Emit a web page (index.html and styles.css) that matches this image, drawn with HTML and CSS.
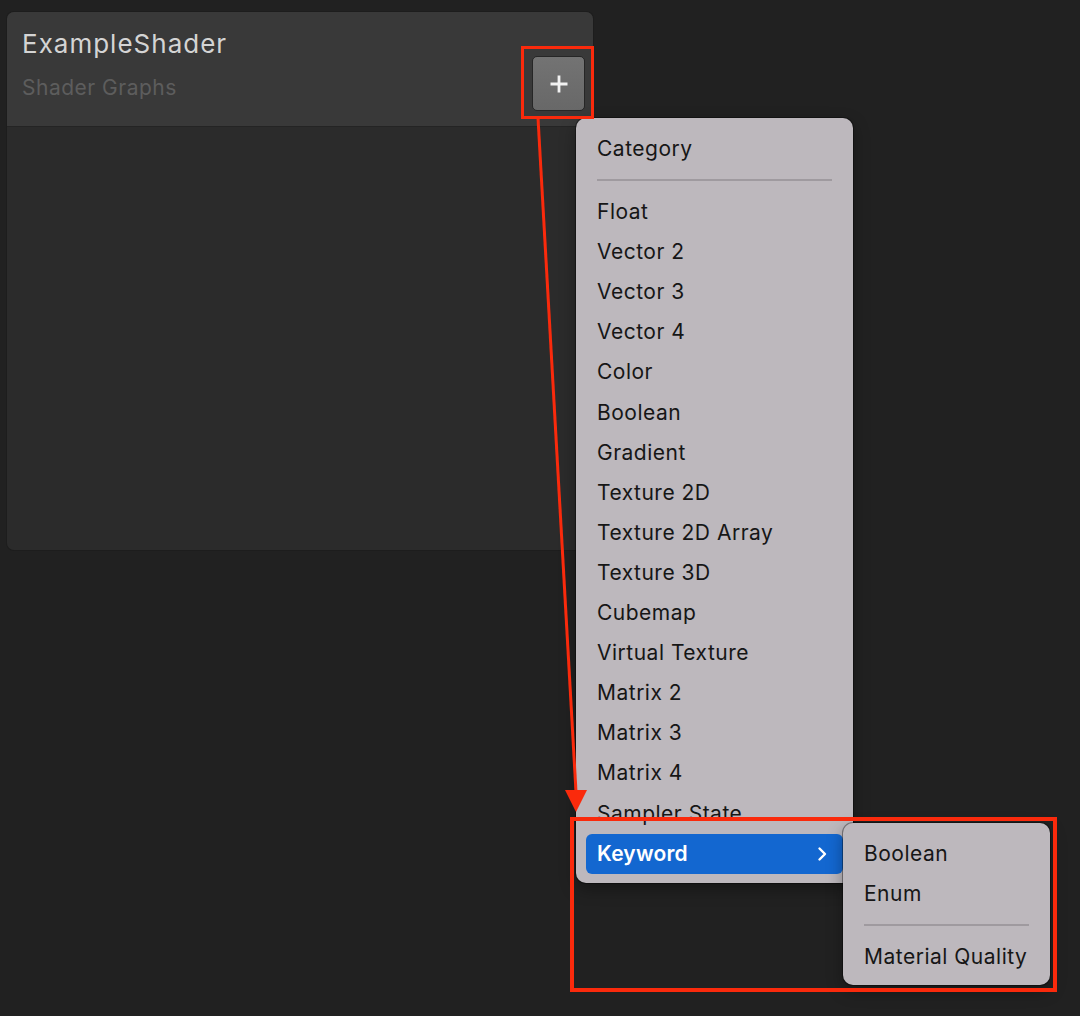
FILE: index.html
```html
<!DOCTYPE html>
<html>
<head>
<meta charset="utf-8">
<link rel="stylesheet" href="styles.css">
</head>
<body>
<div class="page">
  <section class="panel">
    <header class="panel-header">
      <div class="titles">
        <div class="title">ExampleShader</div>
        <div class="subtitle">Shader Graphs</div>
      </div>
      <button class="add-btn" aria-label="Add">
        <svg width="20" height="20" viewBox="0 0 20 20"><path d="M10 1.5v17M1.5 10h17" stroke="#f2f2f2" stroke-width="2.8" stroke-linecap="butt"/></svg>
      </button>
    </header>
    <div class="panel-body"></div>
  </section>

  <div class="menu main-menu">
    <div class="item">Category</div>
    <div class="sep"></div>
    <div class="item">Float</div>
    <div class="item">Vector 2</div>
    <div class="item">Vector 3</div>
    <div class="item">Vector 4</div>
    <div class="item">Color</div>
    <div class="item">Boolean</div>
    <div class="item">Gradient</div>
    <div class="item">Texture 2D</div>
    <div class="item">Texture 2D Array</div>
    <div class="item">Texture 3D</div>
    <div class="item">Cubemap</div>
    <div class="item">Virtual Texture</div>
    <div class="item">Matrix 2</div>
    <div class="item">Matrix 3</div>
    <div class="item">Matrix 4</div>
    <div class="item">Sampler State</div>
    <div class="item active"><span>Keyword</span>
      <svg class="chev" width="10" height="16" viewBox="0 0 10 16"><path d="M2.5 2.5L8 8l-5.5 5.5" fill="none" stroke="#fff" stroke-width="2.4" stroke-linecap="round" stroke-linejoin="round"/></svg>
    </div>
  </div>

  <div class="menu sub-menu">
    <div class="item">Boolean</div>
    <div class="item">Enum</div>
    <div class="sep"></div>
    <div class="item">Material Quality</div>
  </div>

  <svg class="annot" width="1080" height="1016" viewBox="0 0 1080 1016">
    <rect x="522.5" y="47.5" width="70" height="70" fill="none" stroke="#fa2a0c" stroke-width="3"/>
    <line x1="538" y1="118" x2="576" y2="792" stroke="#fa2a0c" stroke-width="3"/>
    <polygon points="565,790 587,790 576,812" fill="#fa2a0c"/>
    <rect x="572" y="819" width="483" height="171" fill="none" stroke="#fa2a0c" stroke-width="4"/>
  </svg>
</div>
</body>
</html>
```

FILE: styles.css
```css
* { box-sizing: border-box; }
html, body {
  margin: 0;
  padding: 0;
  width: 1080px;
  height: 1016px;
  overflow: hidden;
  background: #212121;
  font-family: Inter, "Noto Sans", "Liberation Sans", sans-serif;
}
.page {
  position: relative;
  width: 1080px;
  height: 1016px;
  padding: 12px 0 0 7px;
}
.panel {
  width: 586px;
  height: 538px;
  border-radius: 7px;
  background: #2b2b2b;
  overflow: hidden;
  display: flex;
  flex-direction: column;
  box-shadow: 0 0 0 1px #1d1d1d;
}
.panel-header {
  height: 115px;
  background: #393939;
  border-bottom: 1px solid #242424;
  display: flex;
  justify-content: space-between;
  align-items: flex-end;
  padding: 0 8px 15px 15px;
}
.titles {
  align-self: flex-start;
  padding-top: 16px;
}
.title {
  font-size: 26px;
  line-height: 32px;
  letter-spacing: 1px;
  color: #d4d4d4;
}
.subtitle {
  margin-top: 15px;
  font-size: 21px;
  line-height: 26px;
  letter-spacing: 0.5px;
  color: #5d5d5d;
}
.add-btn {
  width: 53px;
  height: 55px;
  border-radius: 5px;
  border: 1px solid #262626;
  background: linear-gradient(#737373, #686868);
  display: flex;
  align-items: center;
  justify-content: center;
  padding: 0;
}
.panel-body { flex: 1; }

.menu {
  position: absolute;
  background: #bdb8bd;
  border-radius: 10px;
  padding: 10px;
  box-shadow: 0 0 0 1px rgba(0,0,0,0.35), 0 6px 16px rgba(0,0,0,0.35);
  color: #161616;
  font-size: 21px;
  letter-spacing: 0.5px;
}
.main-menu {
  left: 576px;
  top: 118px;
  width: 277px;
  height: 765px;
  padding-top: 11px;
}
.sub-menu {
  left: 843px;
  top: 823px;
  width: 207px;
  height: 162px;
  padding-top: 11px;
}
.item {
  height: 40.1px;
  line-height: 40px;
  padding: 0 11px;
  white-space: nowrap;
  border-radius: 6px;
}
.sep {
  height: 2px;
  margin: 10px 11px 11px;
  background: #9f9a9f;
}
.item.active {
  background: #1367d0;
  color: #ffffff;
  font-weight: 600;
  letter-spacing: 0.2px;
  display: flex;
  justify-content: space-between;
  align-items: center;
  padding-right: 16px;
}
.chev { display: block; }
.annot {
  position: absolute;
  left: 0;
  top: 0;
  pointer-events: none;
}
```
